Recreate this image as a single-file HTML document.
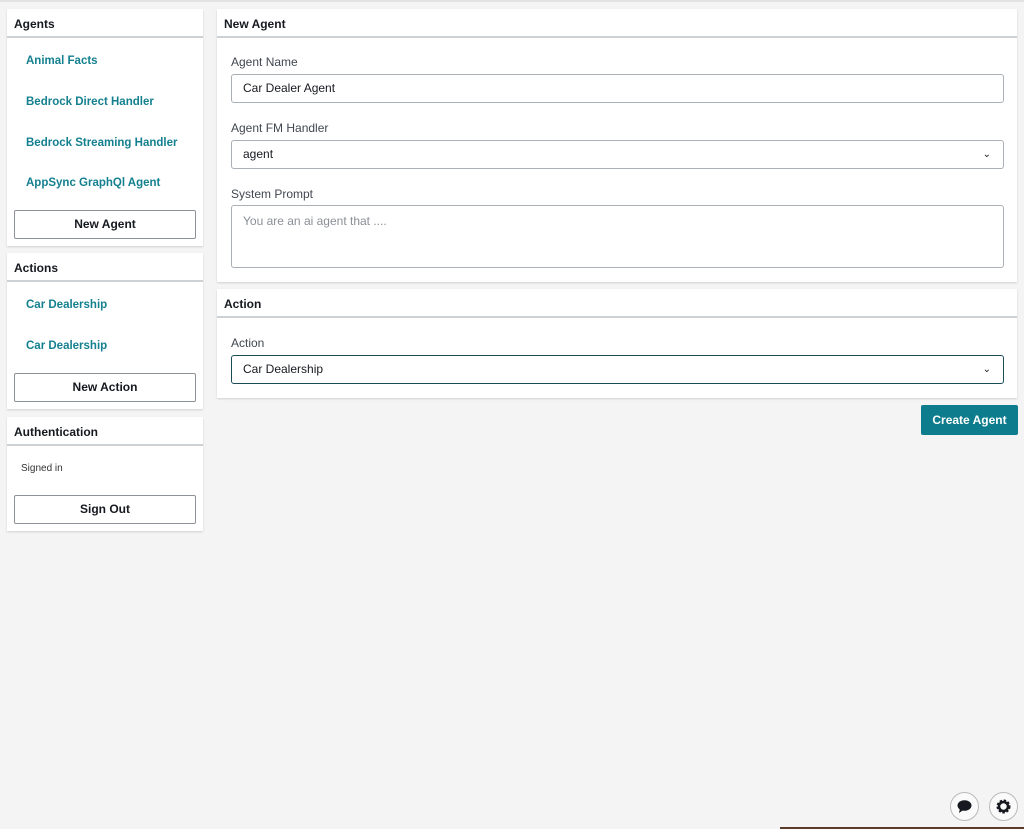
<!DOCTYPE html>
<html><head><meta charset="utf-8"><style>
*{box-sizing:border-box;margin:0;padding:0}
body{width:1024px;height:827px;background:#f4f4f4;font-family:"Liberation Sans",sans-serif;color:#16191f;position:relative;overflow:hidden;border-top:2px solid #e2e2e2}
.card{position:absolute;background:#fff;box-shadow:0 1px 2px rgba(0,0,0,.15)}
.hd{height:29px;border-bottom:2px solid #ccd1d6;font-size:12px;font-weight:bold;padding:8px 7px 0}
.it{position:absolute;left:19px;font-size:11.5px;font-weight:bold;color:#14808f}
.btn{position:absolute;left:7px;width:182px;height:29px;border:1px solid #8d9399;border-radius:2px;font-size:12px;font-weight:bold;text-align:center;line-height:27px}
.lbl{position:absolute;left:14px;font-size:12px;color:#414750}
.inp{position:absolute;left:14px;width:773px;height:29px;border:1px solid #aab0b6;border-radius:3px;font-size:12px;padding:0 11px;line-height:27px}
.chev{position:absolute;right:12px;top:0;font-size:10px}
</style></head><body>
<div class="card" style="left:7px;top:7px;width:196px;height:237px">
<div class="hd">Agents</div>
<div class="it" style="top:46px">Animal Facts</div>
<div class="it" style="top:87px">Bedrock Direct Handler</div>
<div class="it" style="top:128px">Bedrock Streaming Handler</div>
<div class="it" style="top:168px">AppSync GraphQl Agent</div>
<div class="btn" style="top:201px">New Agent</div>
</div>
<div class="card" style="left:7px;top:251px;width:196px;height:156px">
<div class="hd">Actions</div>
<div class="it" style="top:46px">Car Dealership</div>
<div class="it" style="top:87px">Car Dealership</div>
<div class="btn" style="top:120px">New Action</div>
</div>
<div class="card" style="left:7px;top:415px;width:196px;height:114px">
<div class="hd">Authentication</div>
<div style="position:absolute;left:14px;top:46px;font-size:10px;color:#333">Signed in</div>
<div class="btn" style="top:78px">Sign Out</div>
</div>
<div class="card" style="left:217px;top:7px;width:800px;height:273px">
<div class="hd">New Agent</div>
<div class="lbl" style="top:46px">Agent Name</div>
<div class="inp" style="top:65px">Car Dealer Agent</div>
<div class="lbl" style="top:112px">Agent FM Handler</div>
<div class="inp" style="top:131px">agent<span class="chev">&#8964;</span></div>
<div class="lbl" style="top:178px">System Prompt</div>
<div class="inp" style="top:196px;height:63px;line-height:normal;padding-top:8px;color:#8a8f96">You are an ai agent that ....</div>
</div>
<div class="card" style="left:217px;top:287px;width:800px;height:109px">
<div class="hd">Action</div>
<div class="lbl" style="top:47px">Action</div>
<div class="inp" style="top:66px;border:1.5px solid #1b4b55">Car Dealership<span class="chev">&#8964;</span></div>
</div>
<div style="position:absolute;left:921px;top:403px;width:97px;height:30px;background:#0d7c8c;border-radius:2px;color:#fff;font-size:12px;font-weight:bold;text-align:center;line-height:30px">Create Agent</div>
<div style="position:absolute;left:950px;top:790px;width:29px;height:29px;border:1px solid #bbb;border-radius:50%;background:#fafafa">
<svg width="27" height="27" viewBox="0 0 27 27"><ellipse cx="13.5" cy="12.5" rx="7" ry="5.3" fill="#16191f"/><path d="M9 15 L8 20 L13 16.5Z" fill="#16191f"/></svg></div>
<div style="position:absolute;left:989px;top:790px;width:29px;height:29px;border:1px solid #bbb;border-radius:50%;background:#fafafa">
<svg width="27" height="27" viewBox="0 0 27 27"><circle cx="13.5" cy="13.5" r="5.5" fill="none" stroke="#16191f" stroke-width="3" stroke-dasharray="2.2 1.5"/><circle cx="13.5" cy="13.5" r="4.5" fill="none" stroke="#16191f" stroke-width="2.5"/></svg></div>
<div style="position:absolute;left:780px;top:825px;width:244px;height:2px;background:#5a3a2a"></div>
</body></html>
